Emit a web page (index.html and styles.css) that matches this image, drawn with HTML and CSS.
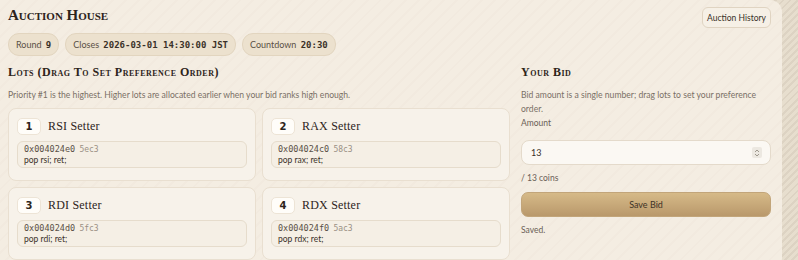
FILE: index.html
```html
<html lang="en">
<head>
    <meta charset="UTF-8">
    <meta name="viewport" content="width=device-width, initial-scale=1.0">
    <title>Auction House</title>
    <link rel="stylesheet" href="styles.css">
</head>
<body>
    <div class="house">
        <div class="top">
            <div>
                <h1 class="title">Auction House</h1>
                <div class="pills">
                    <span class="pill">Round <b>9</b></span>
                    <span class="pill">Closes <b>2026-03-01 14:30:00 JST</b></span>
                    <span class="pill">Countdown <b>20:30</b></span>
                </div>
            </div>
            <button class="history-btn">Auction History</button>
        </div>

        <div class="main">
            <section class="lots">
                <h2 class="heading">Lots (Drag To Set Preference Order)</h2>
                <p class="note">Priority #1 is the highest. Higher lots are allocated earlier when your bid ranks high enough.</p>
                <div class="lot-grid">
                    <div class="lot">
                        <div class="lot-head"><span class="rank">1</span><span class="lot-name">RSI Setter</span></div>
                        <div class="gadget">
                            <div class="gadget-line"><span class="addr">0x004024e0</span> <span class="bytes">5ec3</span></div>
                            <div class="asm">pop rsi; ret;</div>
                        </div>
                    </div>
                    <div class="lot">
                        <div class="lot-head"><span class="rank">2</span><span class="lot-name">RAX Setter</span></div>
                        <div class="gadget">
                            <div class="gadget-line"><span class="addr">0x004024c0</span> <span class="bytes">58c3</span></div>
                            <div class="asm">pop rax; ret;</div>
                        </div>
                    </div>
                    <div class="lot">
                        <div class="lot-head"><span class="rank">3</span><span class="lot-name">RDI Setter</span></div>
                        <div class="gadget">
                            <div class="gadget-line"><span class="addr">0x004024d0</span> <span class="bytes">5fc3</span></div>
                            <div class="asm">pop rdi; ret;</div>
                        </div>
                    </div>
                    <div class="lot">
                        <div class="lot-head"><span class="rank">4</span><span class="lot-name">RDX Setter</span></div>
                        <div class="gadget">
                            <div class="gadget-line"><span class="addr">0x004024f0</span> <span class="bytes">5ac3</span></div>
                            <div class="asm">pop rdx; ret;</div>
                        </div>
                    </div>
                </div>
            </section>

            <section class="bid">
                <h2 class="heading">Your Bid</h2>
                <p class="note">Bid amount is a single number; drag lots to set your preference order.</p>
                <label class="label">Amount</label>
                <div class="amount">
                    <span>13</span>
                    <span class="spin">
                        <svg width="6" height="10" viewBox="0 0 6 10"><path d="M1 4 L3 2 L5 4 M1 6 L3 8 L5 6" fill="none" stroke="#8a8377" stroke-width="0.8"/></svg>
                    </span>
                </div>
                <div class="coins">/ 13 coins</div>
                <button class="save">Save Bid</button>
                <div class="status">Saved.</div>
            </section>
        </div>
    </div>
</body>
</html>
```

FILE: styles.css
```css
body {
    margin: 0;
    font-family: 'Lato', sans-serif;
    color: #4a4036;
    background: repeating-linear-gradient(135deg, #e7dece 0 3px, #ddd3c3 3px 5px);
    height: 260px;
    overflow: hidden;
}

.house {
    width: 782px;
    height: 270px;
    box-sizing: border-box;
    padding: 6px 11px 0 8px;
    background: repeating-linear-gradient(135deg, #f4ede2 0 7px, #f2eadf 7px 9px);
    border-radius: 0 12px 0 0;
}

.top {
    display: flex;
    justify-content: space-between;
    align-items: flex-start;
}

.title {
    margin: 0;
    font-family: 'Liberation Serif', serif;
    font-variant: small-caps;
    font-weight: bold;
    font-size: 15px;
    line-height: 18px;
    color: #2d241b;
}

.pills {
    display: flex;
    gap: 6px;
    margin-top: 9px;
}

.pill {
    background: #ece1ce;
    border: 1px solid #e2d5bf;
    border-radius: 11px;
    padding: 0 7px;
    height: 21px;
    line-height: 21px;
    font-size: 9px;
    color: #5a5045;
}

.pill b {
    font-family: 'DejaVu Sans Mono', monospace;
    font-size: 9px;
    color: #3a3128;
    margin-left: 2px;
}

.history-btn {
    margin-top: 1px;
    font-family: 'Lato', sans-serif;
    font-size: 8.5px;
    color: #3a3128;
    background: #f6f0e6;
    border: 1px solid #e0d4c2;
    border-radius: 6px;
    height: 21px;
    padding: 0 4px;
}

.main {
    display: grid;
    grid-template-columns: 502px 250px;
    gap: 11px;
    margin-top: 8px;
}

.heading {
    margin: 0;
    font-family: 'Liberation Serif', serif;
    font-variant: small-caps;
    font-weight: bold;
    font-size: 12px;
    line-height: 16px;
    letter-spacing: 0.5px;
    color: #2d241b;
}

.note {
    margin: 8px 0 0;
    font-size: 8.6px;
    line-height: 14px;
    color: #7a7066;
}

.lot-grid {
    display: grid;
    grid-template-columns: 1fr 1fr;
    gap: 6px;
    margin-top: 6px;
}

.lot {
    background: #f7f2ea;
    border: 1px solid #e9dfd0;
    border-radius: 8px;
    padding: 9px 8px 7px;
    height: 73px;
    box-sizing: border-box;
}

.lot-head {
    display: flex;
    align-items: center;
    gap: 7px;
    height: 16px;
}

.rank {
    width: 22px;
    height: 15px;
    line-height: 15px;
    text-align: center;
    background: #fffdf9;
    border: 1px solid #ede4d6;
    border-radius: 5px;
    font-family: 'DejaVu Sans', sans-serif;
    font-weight: bold;
    font-size: 10px;
    color: #2d241b;
}

.lot-name {
    font-family: 'Liberation Serif', serif;
    font-size: 12px;
    letter-spacing: 0.2px;
    color: #2d241b;
}

.gadget {
    margin-top: 7px;
    background: #f5efe5;
    border: 1px solid #e6dccc;
    border-radius: 6px;
    padding: 2px 6px;
    height: 27px;
    box-sizing: border-box;
    font-size: 8.5px;
}

.gadget-line {
    line-height: 11px;
    height: 11px;
}

.addr {
    font-family: 'DejaVu Sans Mono', monospace;
    font-size: 8.5px;
    color: #5a5045;
}

.bytes {
    font-family: 'DejaVu Sans Mono', monospace;
    font-size: 8px;
    color: #9a9084;
    margin-left: 2px;
}

.asm {
    font-size: 8.5px;
    line-height: 11px;
    color: #3a3128;
}

.label {
    display: block;
    font-size: 8.5px;
    line-height: 14px;
    color: #6a6056;
}

.amount {
    margin-top: 10px;
    display: flex;
    justify-content: space-between;
    align-items: center;
    height: 25px;
    box-sizing: border-box;
    padding: 0 8px 0 9px;
    background: #fbf8f3;
    border: 1px solid #e4dacb;
    border-radius: 8px;
    font-size: 9px;
    color: #3a3128;
}

.spin {
    display: flex;
    align-items: center;
    justify-content: center;
    width: 10px;
    height: 11px;
    background: #ece8e1;
    border-radius: 2px;
}

.coins {
    margin-top: 6px;
    font-size: 8.5px;
    line-height: 14px;
    color: #6a6056;
}

.bid .save {
    margin-top: 7px;
    width: 100%;
    height: 25px;
    border: 1px solid #c2a57a;
    border-radius: 7px;
    background: linear-gradient(#d6ba88, #b9986b);
    font-family: 'Lato', sans-serif;
    font-size: 9px;
    color: #3e3226;
}

.status {
    margin-top: 6px;
    font-size: 8.5px;
    line-height: 14px;
    color: #6a6056;
}
```
